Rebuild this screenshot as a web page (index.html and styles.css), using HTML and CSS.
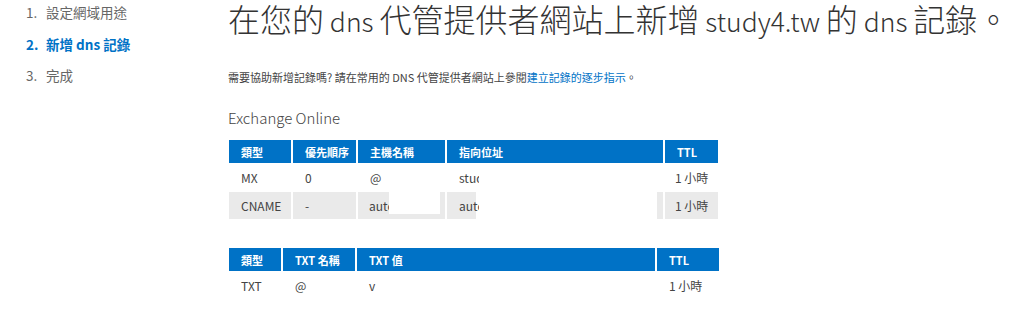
FILE: index.html
```html
<!DOCTYPE html>
<html lang="zh-Hant">
<head>
  <meta charset="UTF-8" />
  <title>新增 dns 記錄</title>
  <link rel="stylesheet" href="styles.css">
</head>
<body>
  <div class="wizard">
    <ol class="steps">
      <li><span class="num">1.</span>設定網域用途</li>
      <li class="active"><span class="num">2.</span>新增 dns 記錄</li>
      <li><span class="num">3.</span>完成</li>
    </ol>

    <div class="content">
      <h1 class="title">在您的<span class="en"> dns </span>代管提供者網站上新增<span class="en"> study4.tw </span>的<span class="en"> dns </span>記錄。</h1>
      <p class="help">需要協助新增記錄嗎? 請在常用的 DNS 代管提供者網站上參閱<a href="#">建立記錄的逐步指示</a>。</p>

      <h2 class="section">Exchange Online</h2>

      <table class="records mx">
        <thead>
          <tr>
            <th class="c-type">類型</th>
            <th class="c-prio">優先順序</th>
            <th class="c-host">主機名稱</th>
            <th class="c-point">指向位址</th>
            <th class="c-ttl">TTL</th>
          </tr>
        </thead>
        <tbody>
          <tr>
            <td>MX</td>
            <td>0</td>
            <td>@</td>
            <td><span class="clip">study4-tw.mail.protection.outlook.com</span></td>
            <td class="ttl">1 小時</td>
          </tr>
          <tr class="shade">
            <td>CNAME</td>
            <td>-</td>
            <td class="masked">
              <div class="mask-row"><span class="clip">autodiscover</span><span class="blank"></span></div>
            </td>
            <td class="hidden-val"><span class="clip">autodiscover.outlook.com</span></td>
            <td class="ttl">1 小時</td>
          </tr>
        </tbody>
      </table>

      <table class="records txt">
        <thead>
          <tr>
            <th class="t-type">類型</th>
            <th class="t-name">TXT 名稱</th>
            <th class="t-val">TXT 值</th>
            <th class="t-ttl">TTL</th>
          </tr>
        </thead>
        <tbody>
          <tr>
            <td>TXT</td>
            <td>@</td>
            <td>v</td>
            <td>1 小時</td>
          </tr>
        </tbody>
      </table>
    </div>
  </div>
</body>
</html>
```

FILE: styles.css
```css
:root {
  --blue:#0072c6;--text:#444;--muted:#666;--shade:#eaeaea;
}
* {margin:0;padding:0;box-sizing:border-box}
body {
  background:#fff;color:var(--text);
  font-family:"Noto Sans CJK TC","Noto Sans",sans-serif;
}
.wizard {display:flex;align-items:flex-start}

/* 左側步驟 */
.steps {
  width:228px;flex-shrink:0;list-style:none;padding-left:26px;
  display:flex;flex-direction:column;gap:7.5px;
}
.steps li {font-size:13.5px;line-height:24px;color:var(--muted)}
.steps .num {display:inline-block;width:20px}
.steps .active {color:var(--blue);font-weight:700}

.content {flex:1}
.title {
  font-size:32px;font-weight:300;line-height:normal;margin-top:-5px;color:#333;white-space:nowrap;
}
.title .en {font-size:26.5px;line-height:normal}
.help {font-size:11px;line-height:16px;margin-top:28px;color:#444}
.help a {color:var(--blue);text-decoration:none}
.section {font-size:15px;font-weight:300;line-height:22px;margin-top:22px;color:#444}

/* 記錄表格 */
.records {
  border-collapse:separate;border-spacing:2px 1px;table-layout:fixed;margin-left:-1px;
}
.records.mx {margin-top:10px}
.records.txt {margin-top:27px}
.records th {
  background:var(--blue);color:#fff;font-size:11px;font-weight:700;text-align:left;
  height:23px;padding:0 0 0 12px;white-space:nowrap;
}
.records td {
  font-size:12px;height:26px;line-height:26px;padding:1px 0 0 12px;white-space:nowrap;
  overflow:hidden;
}
.shade td {background:var(--shade)}
.records td.ttl {padding-left:10px}

.c-type {width:62px}.c-prio {width:63px}.c-host {width:87px}.c-point {width:216px}.c-ttl {width:53px}
.t-type {width:52px}.t-name {width:72px}.t-val {width:298px}.t-ttl {width:62px}

.clip {display:inline-block;width:20px;overflow:hidden;white-space:nowrap;vertical-align:top}
.records td.masked {vertical-align:top;padding:0 0 0 11px}
.mask-row {display:flex;align-items:flex-start;height:26px}
.mask-row .clip {padding-top:1px}
.blank {width:51px;height:22px;background:#fff}
.shade td.hidden-val {
  background:linear-gradient(to right,var(--shade) 29px,#fff 29px,#fff 210px,var(--shade) 210px);
}
```
